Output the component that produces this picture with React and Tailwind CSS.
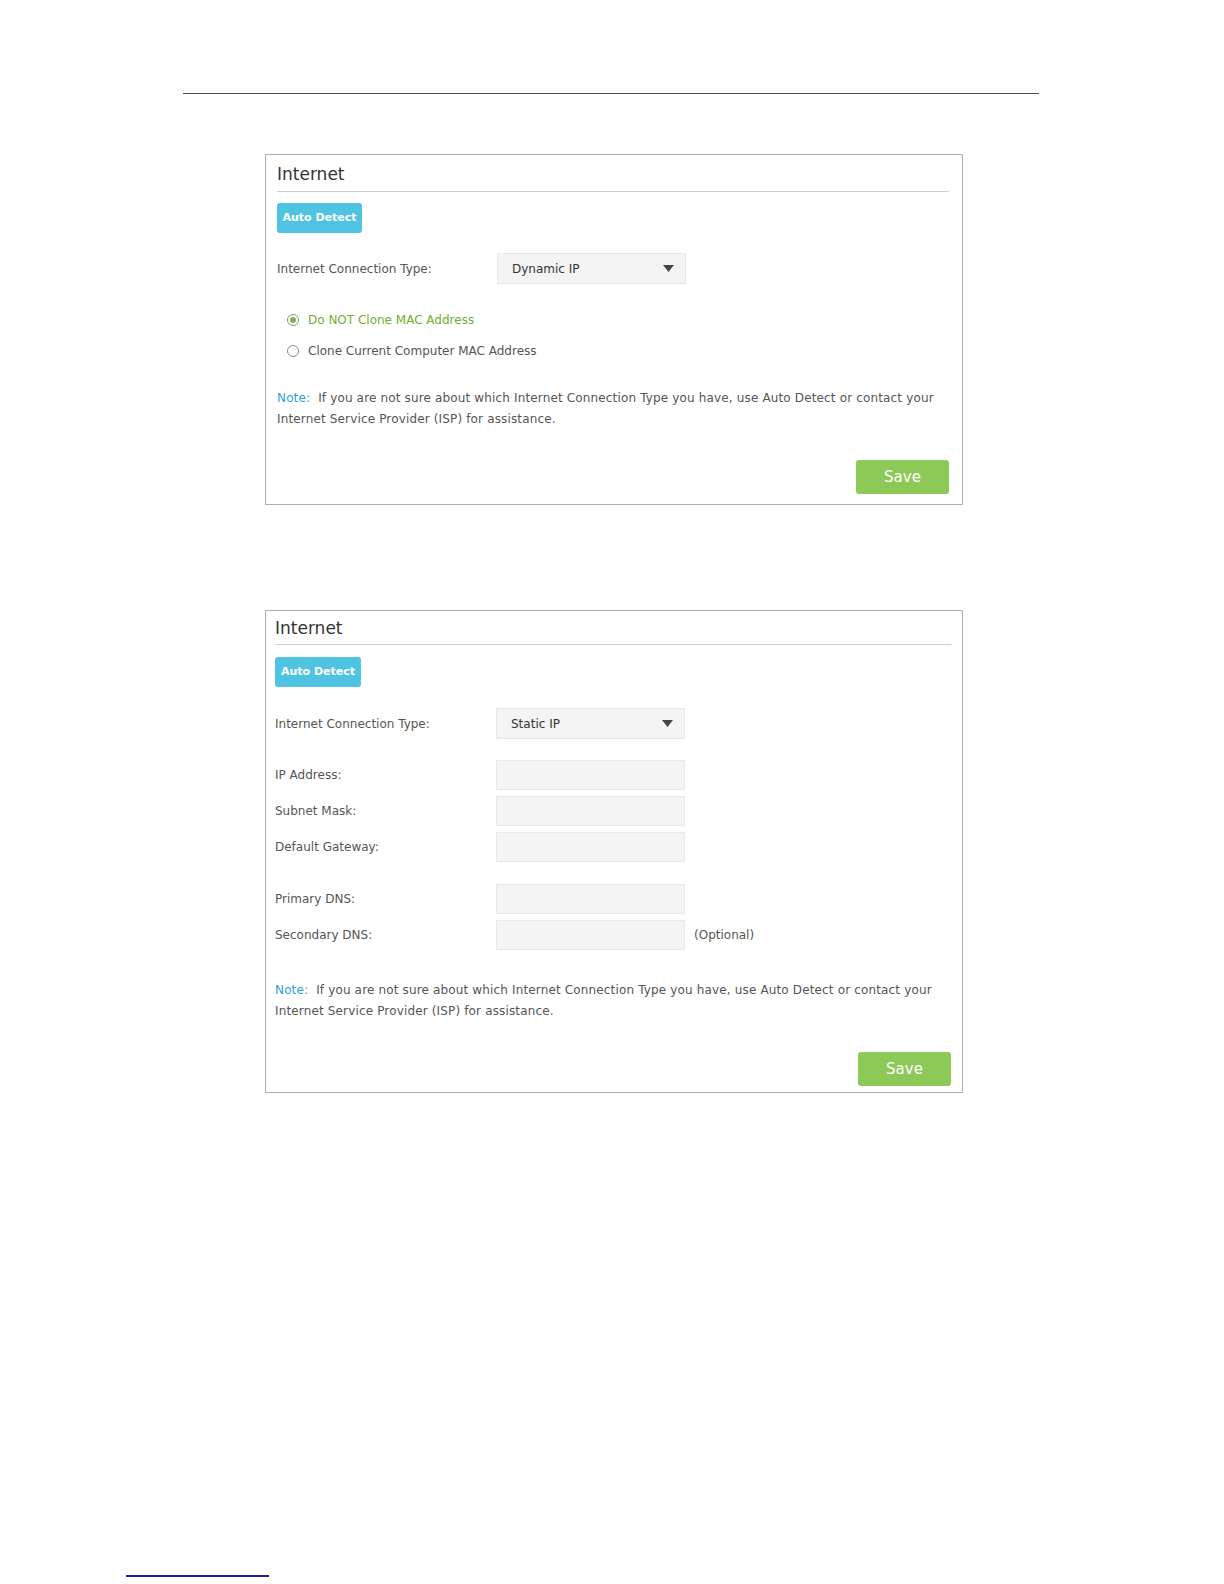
import React from "react";

const font = { fontFamily: '"DejaVu Sans", Verdana, sans-serif' };

function Caret() {
  return (
    <svg width="11" height="7" viewBox="0 0 11 7" className="shrink-0">
      <path d="M0 0 L11 0 L5.5 7 Z" fill="#444" />
    </svg>
  );
}

function Select({ value }) {
  return (
    <div className="w-[189px] h-[31px] bg-[#f4f4f4] border border-[#e8e8e8] flex items-center justify-between pl-[14px] pr-[11px] text-[12px] text-[#333]">
      <span>{value}</span>
      <Caret />
    </div>
  );
}

function Radio({ checked, label }) {
  return (
    <div className="flex items-center h-[20px] pl-[10px]">
      <div className="w-[12px] h-[12px] rounded-full border border-[#8a8a8a] bg-white flex items-center justify-center">
        {checked && <div className="w-[6px] h-[6px] rounded-full bg-[#7fb446]" />}
      </div>
      <span className={"ml-[9px] text-[12px] " + (checked ? "text-[#72ad32]" : "text-[#555]")}>{label}</span>
    </div>
  );
}

function Note() {
  return (
    <div className="text-[12px] leading-[21px] text-[#555] tracking-[0.15px]">
      <span className="text-[#2c9fd8]">Note:</span>&nbsp; If you are not sure about which Internet Connection Type you have, use Auto Detect or contact your
      <br />
      Internet Service Provider (ISP) for assistance.
    </div>
  );
}

function InputRow({ label, extra, className = "" }) {
  return (
    <div className={"flex items-center " + className}>
      <div className="w-[221px] text-[12px] text-[#555]">{label}</div>
      <div className="w-[189px] h-[30px] bg-[#f4f4f4] border border-[#e8e8e8]" />
      {extra && <span className="ml-[9px] text-[12px] text-[#555]">{extra}</span>}
    </div>
  );
}

export default function App() {
  return (
    <div className="w-[1224px] h-[1584px] bg-white flex flex-col" style={font}>
      <div className="mt-[93px] ml-[183px] w-[856px] h-px bg-[#4a4a4a]" />

      {/* Card 1 */}
      <div className="mt-[60px] ml-[265px] w-[698px] h-[351px] border border-[#aeaeae] flex flex-col pl-[11px] pr-[13px]">
        <div className="h-[37px] pt-[4px] border-b border-[#cfcfcf] flex items-center text-[17px] text-[#333]">Internet</div>
        <div className="mt-[11px] w-[85px] h-[30px] rounded-[3px] bg-[#4fc4e2] text-white text-[11px] font-bold flex items-center justify-center">
          Auto Detect
        </div>
        <div className="mt-[20px] flex items-center">
          <div className="w-[220px] text-[12px] text-[#555]">Internet Connection Type:</div>
          <Select value="Dynamic IP" />
        </div>
        <div className="mt-[26px] flex flex-col gap-[11px]">
          <Radio checked label="Do NOT Clone MAC Address" />
          <Radio label="Clone Current Computer MAC Address" />
        </div>
        <div className="mt-[27px]">
          <Note />
        </div>
        <div className="mt-[30px] flex justify-end">
          <div className="w-[93px] h-[34px] rounded-[3px] bg-[#8dc957] text-white text-[15px] flex items-center justify-center">Save</div>
        </div>
      </div>

      {/* Card 2 */}
      <div className="mt-[105px] ml-[265px] w-[698px] h-[483px] border border-[#aeaeae] flex flex-col pl-[9px] pr-[11px]">
        <div className="h-[34px] pt-[2px] border-b border-[#cfcfcf] flex items-center text-[17px] text-[#333]">Internet</div>
        <div className="mt-[12px] w-[86px] h-[30px] rounded-[3px] bg-[#4fc4e2] text-white text-[11px] font-bold flex items-center justify-center">
          Auto Detect
        </div>
        <div className="mt-[21px] flex items-center">
          <div className="w-[221px] text-[12px] text-[#555]">Internet Connection Type:</div>
          <Select value="Static IP" />
        </div>
        <InputRow className="mt-[21px]" label="IP Address:" />
        <InputRow className="mt-[6px]" label="Subnet Mask:" />
        <InputRow className="mt-[6px]" label="Default Gateway:" />
        <InputRow className="mt-[22px]" label="Primary DNS:" />
        <InputRow className="mt-[6px]" label="Secondary DNS:" extra="(Optional)" />
        <div className="mt-[30px]">
          <Note />
        </div>
        <div className="mt-[30px] flex justify-end">
          <div className="w-[93px] h-[34px] rounded-[3px] bg-[#8dc957] text-white text-[15px] flex items-center justify-center">Save</div>
        </div>
      </div>

      <div className="mt-[482px] ml-[126px] w-[143px] h-[2px] bg-[#1f1f8f]" />
    </div>
  );
}
